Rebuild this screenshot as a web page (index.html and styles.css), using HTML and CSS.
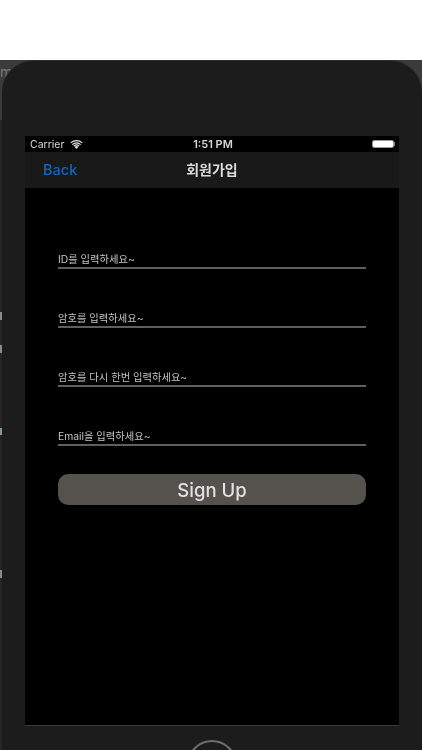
FILE: index.html
```html
<!DOCTYPE html>
<html lang="ko">
<head>
<meta charset="utf-8">
<title>회원가입</title>
<link rel="stylesheet" href="styles.css">
</head>
<body>
<div class="desk">
  <span class="desk-text">m</span>
  <div class="device">
    <div class="screen">
      <div class="status">
        <div class="status-left">
          <span>Carrier</span>
          <svg class="wifi" viewBox="0 0 14 10" aria-hidden="true">
            <path d="M7 10 4.8 7.6a3.2 3.2 0 0 1 4.4 0Z" fill="#e4e4e4"/>
            <path d="M3.6 6.4a5 5 0 0 1 6.8 0l-.8.8a3.9 3.9 0 0 0-5.2 0Z" fill="#e4e4e4"/>
            <path d="M1.9 4.6a7.5 7.5 0 0 1 10.2 0l-.8.9a6.3 6.3 0 0 0-8.6 0Z" fill="#e4e4e4"/>
            <path d="M.2 2.8a10 10 0 0 1 13.6 0l-.8.9a8.8 8.8 0 0 0-12 0Z" fill="#e4e4e4"/>
          </svg>
        </div>
        <span class="status-time">1:51 PM</span>
        <div class="battery"><span class="battery-fill"></span></div>
      </div>
      <div class="nav">
        <span class="back">Back</span>
        <span class="title">회원가입</span>
      </div>
      <div class="form">
        <div class="field">ID를 입력하세요~</div>
        <div class="field">암호를 입력하세요~</div>
        <div class="field">암호를 다시 한번 입력하세요~</div>
        <div class="field">Email을 입력하세요~</div>
        <div class="signup">Sign Up</div>
      </div>
    </div>
    <div class="home"></div>
  </div>
</div>
</body>
</html>
```
FILE: styles.css
```css
* { box-sizing: border-box; }
html, body { margin: 0; height: 100%; }
body {
  background: #fff;
  overflow: hidden;
  font-family: "Inter", "Noto Sans CJK KR", "Liberation Sans", sans-serif;
}
.desk {
  position: relative;
  margin-top: 60px;
  height: 690px;
  overflow: hidden;
  background:
    linear-gradient(#8a8a8a, #8a8a8a) 0 252px / 2px 8px no-repeat,
    linear-gradient(#8a8a8a, #8a8a8a) 0 285px / 2px 8px no-repeat,
    linear-gradient(#7f9a98, #7f9a98) 0 368px / 2px 7px no-repeat,
    linear-gradient(#8a8a8a, #8a8a8a) 0 510px / 2px 8px no-repeat,
    linear-gradient(#3b3b3b 0 60px, #262626 60px) 0 0 no-repeat;
  padding-left: 2px;
}
.desk-text {
  position: absolute;
  left: 0;
  top: 4px;
  font-size: 14px;
  line-height: 16px;
  color: #787878;
}
.device {
  position: relative;
  height: 690px;
  width: 420px;
  background: #1c1c1c;
  border-radius: 32px 32px 0 0;
  border-top: 1px solid #2d2d2d;
  padding: 75px 23px 0;
  overflow: hidden;
  filter: blur(.45px);
}
.screen {
  height: 590px;
  background: #000;
  display: flex;
  flex-direction: column;
  border-bottom: 1px solid #3a3a3a;
}
.status {
  height: 16px;
  display: grid;
  grid-template-columns: 1fr auto 1fr;
  align-items: center;
  padding: 0 4px 0 5px;
  color: #d8d8d8;
  font-size: 10.5px;
}
.status-left { display: flex; align-items: center; gap: 6px; }
.wifi { width: 13px; height: 9px; }
.status-time { font-weight: 600; font-size: 11px; margin-left: 1px; }
.battery {
  position: relative;
  justify-self: end;
  margin-right: 1px;
  width: 22px;
  height: 8px;
  border: 1px solid #999;
  border-radius: 2px;
}
.battery::after {
  content: "";
  position: absolute;
  left: 21px;
  top: 1px;
  width: 1px;
  height: 4px;
  background: #888;
}
.battery-fill { display: block; height: 100%; background: #fff; border-radius: 1px; }
.nav {
  height: 36px;
  background: #191919;
  display: grid;
  grid-template-columns: 1fr auto 1fr;
  align-items: center;
  padding: 0 18px 2px;
}
.back { color: #0f67c6; font-size: 14.5px; font-weight: 500; }
.title {
  color: #dcdcdc;
  font-size: 14px;
  font-weight: 700;
}
.form {
  display: flex;
  flex-direction: column;
  gap: 29px;
  padding: 51px 33px 0;
}
.field {
  height: 30px;
  display: flex;
  align-items: flex-end;
  padding-bottom: 1px;
  border-bottom: 2px solid #5f5f5f;
  color: #c4c4c4;
  font-size: 10.3px;
  line-height: 14px;
}
.signup {
  height: 31px;
  margin-top: -1px;
  background: #55514c;
  border-radius: 10px;
  color: #e2e2e2;
  font-size: 18.5px;
  font-weight: 500;
  display: flex;
  align-items: center;
  justify-content: center;
}
.home {
  width: 50px;
  height: 50px;
  margin: 14px auto 0;
  border: 2px solid #6e6e6e;
  border-radius: 50%;
}
```
